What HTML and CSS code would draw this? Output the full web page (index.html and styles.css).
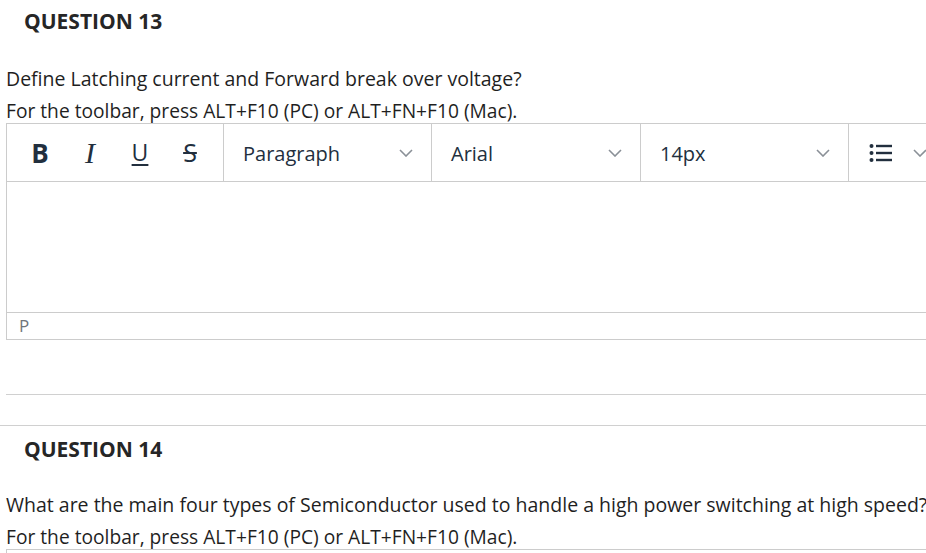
FILE: index.html
```html
<!DOCTYPE html>
<html>
<head>
<meta charset="utf-8">
<link rel="stylesheet" href="styles.css">
</head>
<body>
<div class="page">
  <section class="question">
    <h2 class="qtitle">QUESTION 13</h2>
    <p class="qtext">Define Latching current and Forward break over voltage?</p>
    <p class="hint">For the toolbar, press ALT+F10 (PC) or ALT+FN+F10 (Mac).</p>
    <div class="editor">
      <div class="toolbar">
        <div class="group fmt">
          <span class="btn b">B</span>
          <span class="btn i">I</span>
          <span class="btn u">U</span>
          <span class="btn s">S</span>
        </div>
        <div class="group select w-para"><span>Paragraph</span><svg class="chev" viewBox="0 0 14 8" width="14" height="8"><path d="M1 1l6 6 6-6" fill="none" stroke="#8a9097" stroke-width="1.6"/></svg></div>
        <div class="group select w-font"><span>Arial</span><svg class="chev" viewBox="0 0 14 8" width="14" height="8"><path d="M1 1l6 6 6-6" fill="none" stroke="#8a9097" stroke-width="1.6"/></svg></div>
        <div class="group select w-size"><span>14px</span><svg class="chev" viewBox="0 0 14 8" width="14" height="8"><path d="M1 1l6 6 6-6" fill="none" stroke="#8a9097" stroke-width="1.6"/></svg></div>
        <div class="group list">
          <svg viewBox="0 0 24 20" width="24" height="20"><circle cx="2.5" cy="3" r="2" fill="#222f3e"/><circle cx="2.5" cy="10" r="2" fill="#222f3e"/><circle cx="2.5" cy="17" r="2" fill="#222f3e"/><rect x="7" y="1.8" width="16" height="2.4" fill="#222f3e"/><rect x="7" y="8.8" width="16" height="2.4" fill="#222f3e"/><rect x="7" y="15.8" width="16" height="2.4" fill="#222f3e"/></svg>
          <svg class="chev" viewBox="0 0 14 8" width="14" height="8"><path d="M1 1l6 6 6-6" fill="none" stroke="#8a9097" stroke-width="1.6"/></svg>
        </div>
      </div>
      <div class="content"></div>
      <div class="status">P</div>
    </div>
    <div class="spacer"></div>
  </section>
  <div class="sep"></div>
  <section class="question second">
    <h2 class="qtitle">QUESTION 14</h2>
    <p class="qtext">What are the main four types of Semiconductor used to handle a high power switching at high speed?</p>
    <p class="hint">For the toolbar, press ALT+F10 (PC) or ALT+FN+F10 (Mac).</p>
    <div class="editor"><div class="toolbar"></div></div>
  </section>
</div>
</body>
</html>
```
FILE: styles.css
```css
html, body {
  margin: 0;
  padding: 0;
  background: #fff;
  overflow: hidden;
}
.page {
  width: 1000px;
  font-family: "Open Sans", "Liberation Sans", sans-serif;
  color: #1f1f1f;
}
.qtitle {
  margin: 0;
  padding: 7px 0 0 24px;
  font-size: 21px;
  font-weight: 700;
  line-height: 29px;
  color: #262626;
}
.second .qtitle { padding-top: 9px; }
.qtext {
  margin: 30px 0 0 6px;
  font-size: 19.5px;
  line-height: 25px;
  white-space: nowrap;
}
.second .qtext { margin-top: 28px; }
.hint {
  margin: 7px 0 0 6px;
  font-size: 19.2px;
  line-height: 25px;
  white-space: nowrap;
}
.editor {
  margin: 0 0 0 6px;
  border: 1px solid #cccccc;
  width: 990px;
}
.toolbar {
  display: flex;
  height: 57px;
  border-bottom: 1px solid #cccccc;
}
.group {
  display: flex;
  align-items: center;
  border-right: 1px solid #cccccc;
}
.fmt {
  width: 217px;
  padding-left: 8px;
  box-sizing: border-box;
}
.btn {
  width: 50px;
  text-align: center;
  font-size: 26px;
  color: #222f3e;
  line-height: 1;
}
.btn.b { font-weight: 700; }
.btn.i { font-style: italic; font-family: "Liberation Serif", serif; font-size: 30px; }
.btn.u { text-decoration: underline; text-decoration-thickness: 2px; text-underline-offset: 3px; font-size: 23px; }
.btn.s { text-decoration: line-through; text-decoration-thickness: 2px; font-size: 25px; }
.select {
  box-sizing: border-box;
  padding: 0 18px 0 19px;
  justify-content: space-between;
  font-size: 20px;
  color: #222f3e;
}
.select span { padding-top: 2px; }
.w-para { width: 208px; }
.w-font { width: 209px; }
.w-size { width: 208px; }
.list {
  border-right: none;
  padding-left: 20px;
  gap: 20px;
}
.content {
  height: 130px;
  border-bottom: 1px solid #cccccc;
}
.status {
  height: 26px;
  padding-left: 12px;
  font-size: 17px;
  font-weight: 400;
  line-height: 26px;
  color: #70757a;
}
.spacer {
  height: 54px;
  margin-left: 6px;
  border-bottom: 1px solid #d0d0d0;
}
.sep {
  height: 30px;
  border-bottom: 1px solid #d0d0d0;
}
```
